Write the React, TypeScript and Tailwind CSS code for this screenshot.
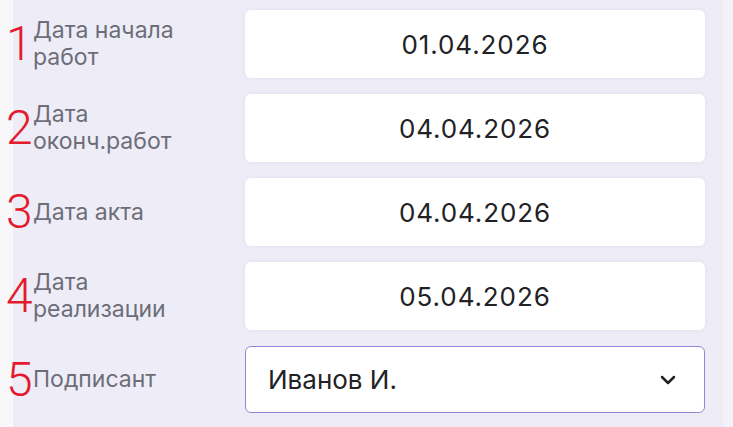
import React from "react";
import { ChevronDown } from "lucide-react";

const rows = [
  { n: "1", label: ["Дата начала", "работ"], value: "01.04.2026" },
  { n: "2", label: ["Дата", "оконч.работ"], value: "04.04.2026" },
  { n: "3", label: ["Дата акта"], value: "04.04.2026" },
  { n: "4", label: ["Дата", "реализации"], value: "05.04.2026" },
];

function Label({ n, lines }: { n: string; lines: string[] }) {
  return (
    <div className="flex w-[232px] shrink-0 items-center">
      <span
        className="-ml-[7px] w-[26px] shrink-0 text-center text-[48px] font-light leading-none text-[#e31b2c]"
        style={{ fontFamily: "Roboto, 'Noto Sans', sans-serif" }}
      >
        {n}
      </span>
      <div
        className="ml-px text-[23px] leading-[27px] text-[#6c6d78]"
        style={{ fontFamily: "Inter, 'Noto Sans', sans-serif" }}
      >
        {lines.map((l) => (
          <div key={l}>{l}</div>
        ))}
      </div>
    </div>
  );
}

export default function App() {
  return (
    <div className="flex h-[427px] w-[733px] overflow-hidden">
      <div className="w-[13px] shrink-0 bg-[#f8f8fb]" />
      <div className="flex flex-1 flex-col gap-4 bg-[#eeedf7] pt-[10px] pr-[18px]">
        {rows.map((r) => (
          <div key={r.n} className="flex h-[68px] items-center">
            <Label n={r.n} lines={r.label} />
            <div
              className="flex h-[68px] flex-1 items-center justify-center rounded-md bg-white text-[26px] tracking-[0.9px] text-[#222226] shadow-[0_0_5px_rgba(0,0,0,0.06)]"
              style={{ fontFamily: "Inter, 'Noto Sans', sans-serif" }}
            >
              {r.value}
            </div>
          </div>
        ))}
        <div className="flex h-[67px] items-center">
          <Label n="5" lines={["Подписант"]} />
          <div
            className="flex h-[67px] flex-1 items-center justify-between rounded-md border-[1.5px] border-[#8e89d4] bg-white pl-[22px] pr-[24px] text-[26px] text-[#222226]"
            style={{ fontFamily: "Inter, 'Noto Sans', sans-serif" }}
          >
            <span>Иванов И.</span>
            <ChevronDown size={24} strokeWidth={2.5} color="#222226" />
          </div>
        </div>
      </div>
      <div className="w-[10px] shrink-0 bg-[#f3f2f8]" />
    </div>
  );
}
